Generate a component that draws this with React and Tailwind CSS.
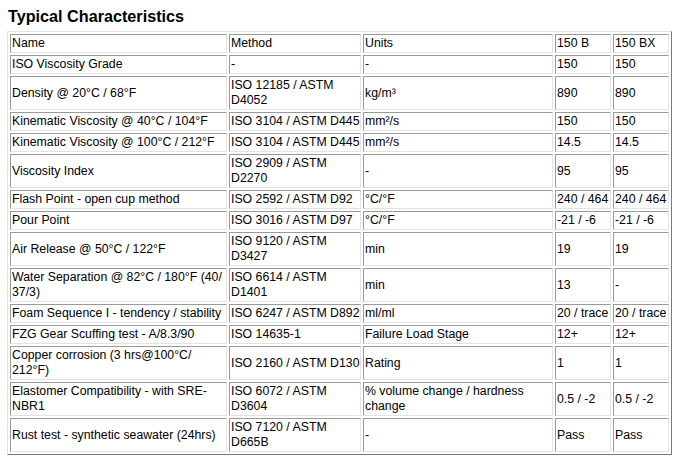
import React from "react";

const rows = [
  ["Name", "Method", "Units", "150 B", "150 BX"],
  ["ISO Viscosity Grade", "-", "-", "150", "150"],
  ["Density @ 20°C / 68°F", "ISO 12185 / ASTM\nD4052", "kg/m³", "890", "890"],
  ["Kinematic Viscosity @ 40°C / 104°F", "ISO 3104 / ASTM D445", "mm²/s", "150", "150"],
  ["Kinematic Viscosity @ 100°C / 212°F", "ISO 3104 / ASTM D445", "mm²/s", "14.5", "14.5"],
  ["Viscosity Index", "ISO 2909 / ASTM\nD2270", "-", "95", "95"],
  ["Flash Point - open cup method", "ISO 2592 / ASTM D92", "°C/°F", "240 / 464", "240 / 464"],
  ["Pour Point", "ISO 3016 / ASTM D97", "°C/°F", "-21 / -6", "-21 / -6"],
  ["Air Release @ 50°C / 122°F", "ISO 9120 / ASTM\nD3427", "min", "19", "19"],
  ["Water Separation @ 82°C / 180°F (40/\n37/3)", "ISO 6614 / ASTM\nD1401", "min", "13", "-"],
  ["Foam Sequence I - tendency / stability", "ISO 6247 / ASTM D892", "ml/ml", "20 / trace", "20 / trace"],
  ["FZG Gear Scuffing test - A/8.3/90", "ISO 14635-1", "Failure Load Stage", "12+", "12+"],
  ["Copper corrosion (3 hrs@100°C/\n212°F)", "ISO 2160 / ASTM D130", "Rating", "1", "1"],
  ["Elastomer Compatibility - with SRE-\nNBR1", "ISO 6072 / ASTM\nD3604", "% volume change / hardness\nchange", "0.5 / -2", "0.5 / -2"],
  ["Rust test - synthetic seawater (24hrs)", "ISO 7120 / ASTM\nD665B", "-", "Pass", "Pass"],
];

const widths = ["w-[217px]", "w-[132px]", "w-[190px]", "w-[56px]", "w-[56px]"];

export default function App() {
  return (
    <div className="bg-white w-[675px] h-[458px] overflow-hidden pl-[7px] pt-[5px] font-['Liberation_Sans',Arial,sans-serif] text-black">
      <h2 className="text-[16.2px] leading-[22px] font-bold ml-[1px] mb-[4px]">Typical Characteristics</h2>
      <table className="table-fixed border-separate border-spacing-[2px] w-[665px] border border-t-[#e3e3e3] border-l-[#e3e3e3] border-r-[#7a7a7a] border-b-[#7a7a7a] text-[12.3px] leading-[15px]">
        <tbody>
          {rows.map((r, i) => (
            <tr key={i}>
              {r.map((c, j) => (
                <td
                  key={j}
                  className={`${widths[j]} p-[1px] align-middle text-left whitespace-pre overflow-hidden border border-t-[#9a9a9a] border-l-[#9a9a9a] border-r-[#e3e3e3] border-b-[#e3e3e3]`}
                >
                  {c}
                </td>
              ))}
            </tr>
          ))}
        </tbody>
      </table>
    </div>
  );
}
